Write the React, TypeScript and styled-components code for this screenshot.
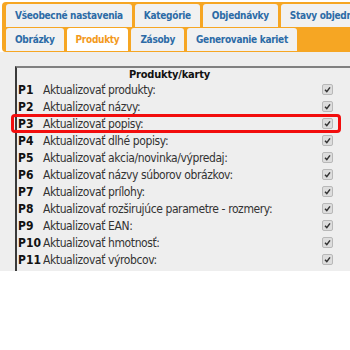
import React from 'react';
import styled, {createGlobalStyle} from 'styled-components';

const GlobalStyle = createGlobalStyle`
  html, body {
    margin: 0;
    padding: 0;
    background: #ffffff;
    overflow: hidden;
  }
  body {
    font-family: "DejaVu Sans Condensed", "DejaVu Sans", sans-serif;
    color: #222;
  }
`;

const Page = styled.div`
  width: 350px;
  height: 350px;
  overflow: hidden;
`;

const TabBar = styled.div`
  margin: 2px 0 0 2px;
  padding: 2px 0 1px 4px;
  background: #f6a623;
  border-radius: 4px 0 0 4px;
  display: flex;
  flex-direction: column;
  gap: 1px;
`;

const TabRow = styled.div`
  display: flex;
  gap: 3px;
  white-space: nowrap;
`;

const Tab = styled.div<{ $active?: boolean }>`
  flex: none;
  height: 23px;
  padding: 0 9px;
  display: flex;
  align-items: center;
  border-radius: 3px 3px 0 0;
  background: ${p => (p.$active ? '#ffffff' : '#f1f1f1')};
  color: ${p => (p.$active ? '#f39a1c' : '#2c6ba6')};
  font-size: 10px;
  letter-spacing: -0.3px;
  font-weight: bold;
`;

const Panel = styled.div`
  height: 219px;
  overflow: hidden;
  background: #eeeeee;
  padding: 14px 0 0 15px;
  box-sizing: border-box;
`;

const Table = styled.div`
  width: 366px;
  height: 100%;
  border-left: 2px solid #3a3a3a;
  border-top: 2px solid #808080;
  font-size: 12px;
  letter-spacing: -0.4px;
`;

const Header = styled.div`
  height: 13px;
  line-height: 13px;
  padding-right: 61px;
  text-align: center;
  font-size: 11px;
  letter-spacing: -0.2px;
  font-weight: bold;
  color: #111;
`;

const Row = styled.div<{ $marked?: boolean }>`
  position: relative;
  display: grid;
  grid-template-columns: 25px 1fr 61px;
  align-items: center;
  height: 17px;
  padding-left: 1px;

  ${p =>
    p.$marked &&
    `
    &::after {
      content: '';
      position: absolute;
      left: -6px;
      top: -1px;
      width: 324px;
      height: 13px;
      border: 3px solid #f20d0d;
      border-radius: 4px;
    }
  `}
`;

const Code = styled.span`
  font-weight: bold;
  color: #111;
  letter-spacing: 0;
`;

const Label = styled.span`
  color: #333;
  white-space: nowrap;
`;

const Check = styled.span`
  width: 9px;
  height: 9px;
  border: 1px solid #b8b8b8;
  border-radius: 2px;
  background: #dddddd;
  display: flex;
  align-items: center;
  justify-content: center;
`;

const rows: [string, string][] = [
  ['P1', 'Aktualizovať produkty:'],
  ['P2', 'Aktualizovať názvy:'],
  ['P3', 'Aktualizovať popisy:'],
  ['P4', 'Aktualizovať dlhé popisy:'],
  ['P5', 'Aktualizovať akcia/novinka/výpredaj:'],
  ['P6', 'Aktualizovať názvy súborov obrázkov:'],
  ['P7', 'Aktualizovať prílohy:'],
  ['P8', 'Aktualizovať rozširujúce parametre - rozmery:'],
  ['P9', 'Aktualizovať EAN:'],
  ['P10', 'Aktualizovať hmotnosť:'],
  ['P11', 'Aktualizovať výrobcov:'],
];

const CheckMark = () => (
  <svg width="7" height="7" viewBox="0 0 7 7">
    <path d="M1 3.8 L2.8 5.6 L6 1.4" fill="none" stroke="#333" strokeWidth="1.5" />
  </svg>
);

export default function App() {
  return (
    <Page>
      <GlobalStyle />
      <TabBar>
        <TabRow>
          <Tab>Všeobecné nastavenia</Tab>
          <Tab>Kategórie</Tab>
          <Tab>Objednávky</Tab>
          <Tab>Stavy objednávok</Tab>
        </TabRow>
        <TabRow>
          <Tab>Obrázky</Tab>
          <Tab $active>Produkty</Tab>
          <Tab>Zásoby</Tab>
          <Tab>Generovanie kariet</Tab>
        </TabRow>
      </TabBar>
      <Panel>
        <Table>
          <Header>Produkty/karty</Header>
          {rows.map(([code, label]) => (
            <Row key={code} $marked={code === 'P3'}>
              <Code>{code}</Code>
              <Label>{label}</Label>
              <Check>
                <CheckMark />
              </Check>
            </Row>
          ))}
        </Table>
      </Panel>
    </Page>
  );
}
